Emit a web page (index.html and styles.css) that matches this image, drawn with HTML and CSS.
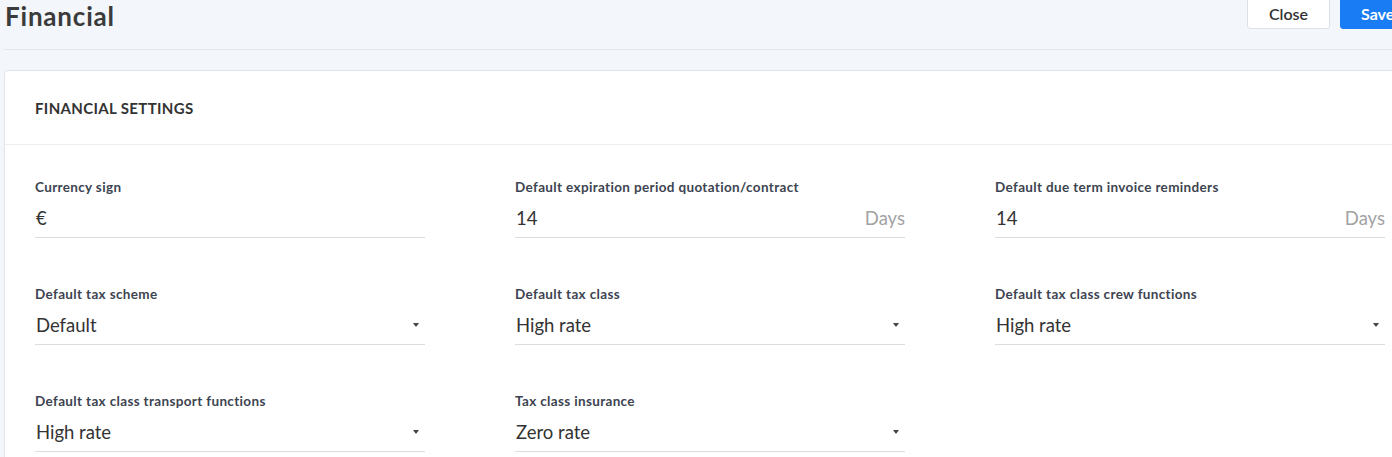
FILE: index.html
```html
<!DOCTYPE html>
<html>
<head>
<meta charset="utf-8">
<link rel="stylesheet" href="styles.css">
</head>
<body>
<div class="page">
  <header class="topbar">
    <h1 class="title">Financial</h1>
    <div class="actions">
      <button class="btn btn-default">Close</button>
      <button class="btn btn-primary">Save</button>
    </div>
  </header>
  <section class="card">
    <div class="card-header">FINANCIAL SETTINGS</div>
    <div class="card-body">
      <div class="field">
        <label class="label">Currency sign</label>
        <div class="input"><span class="value">€</span></div>
      </div>
      <div class="field">
        <label class="label">Default expiration period quotation/contract</label>
        <div class="input"><span class="value">14</span><span class="suffix">Days</span></div>
      </div>
      <div class="field">
        <label class="label">Default due term invoice reminders</label>
        <div class="input"><span class="value">14</span><span class="suffix">Days</span></div>
      </div>
      <div class="field">
        <label class="label">Default tax scheme</label>
        <div class="input select"><span class="value">Default</span><span class="caret"></span></div>
      </div>
      <div class="field">
        <label class="label">Default tax class</label>
        <div class="input select"><span class="value">High rate</span><span class="caret"></span></div>
      </div>
      <div class="field">
        <label class="label">Default tax class crew functions</label>
        <div class="input select"><span class="value">High rate</span><span class="caret"></span></div>
      </div>
      <div class="field">
        <label class="label">Default tax class transport functions</label>
        <div class="input select"><span class="value">High rate</span><span class="caret"></span></div>
      </div>
      <div class="field">
        <label class="label">Tax class insurance</label>
        <div class="input select"><span class="value">Zero rate</span><span class="caret"></span></div>
      </div>
    </div>
  </section>
</div>
</body>
</html>
```
FILE: styles.css
```css
html, body {
  margin: 0;
  padding: 0;
  background: #f3f6fa;
  overflow: hidden;
  font-family: Lato, "Liberation Sans", sans-serif;
  color: #333;
}
.page {
  padding-left: 4px;
  width: 1416px;
}
.topbar {
  height: 50px;
  border-bottom: 1px solid #e3e7ec;
  display: flex;
  justify-content: space-between;
  align-items: flex-start;
  box-sizing: border-box;
}
.title {
  margin: 0;
  padding: 0 0 0 1px;
  font-size: 26px;
  line-height: 32px;
  font-weight: 700;
  letter-spacing: 0.8px;
  color: #3b3b3b;
}
.actions {
  display: flex;
  gap: 10px;
  margin-top: -11px;
}
.btn {
  height: 40px;
  font-family: inherit;
  font-size: 16px;
  border-radius: 3px;
  padding: 10px 20px 0;
  box-sizing: border-box;
  line-height: 20px;
}
.btn-default {
  width: 83px;
  background: #fff;
  border: 1px solid #dde1e6;
  color: #333;
  font-weight: 600;
}
.btn-primary {
  width: 80px;
  background: #1a7cf4;
  border: 1px solid #1a7cf4;
  color: #fff;
  font-weight: 700;
  text-align: left;
}
.card {
  margin-top: 20px;
  background: #fff;
  border: 1px solid #e0e4e8;
  border-radius: 4px;
  height: 500px;
}
.card-header {
  height: 74px;
  box-sizing: border-box;
  border-bottom: 1px solid #eceef1;
  padding: 28px 0 0 30px;
  font-size: 15px;
  line-height: 18px;
  font-weight: 700;
  letter-spacing: 0.35px;
  color: #333;
}
.card-body {
  display: grid;
  grid-template-columns: repeat(3, 390px);
  column-gap: 90px;
  row-gap: 47px;
  padding: 33px 0 0 30px;
}
.label {
  display: block;
  font-size: 13.5px;
  line-height: 18px;
  font-weight: 700;
  letter-spacing: 0.35px;
  color: #3d4451;
  margin-bottom: 4px;
}
.input {
  height: 38px;
  border-bottom: 1px solid #dcdcdc;
  box-sizing: border-box;
  display: flex;
  align-items: center;
  justify-content: space-between;
  font-size: 18.5px;
  padding-bottom: 2px;
}
.value {
  padding-left: 1px;
  color: #333;
}
.suffix {
  color: #a3a3a3;
}
.caret {
  width: 0;
  height: 0;
  border-left: 3.5px solid transparent;
  border-right: 3.5px solid transparent;
  border-top: 4px solid #444;
  margin-right: 6px;
}
```
